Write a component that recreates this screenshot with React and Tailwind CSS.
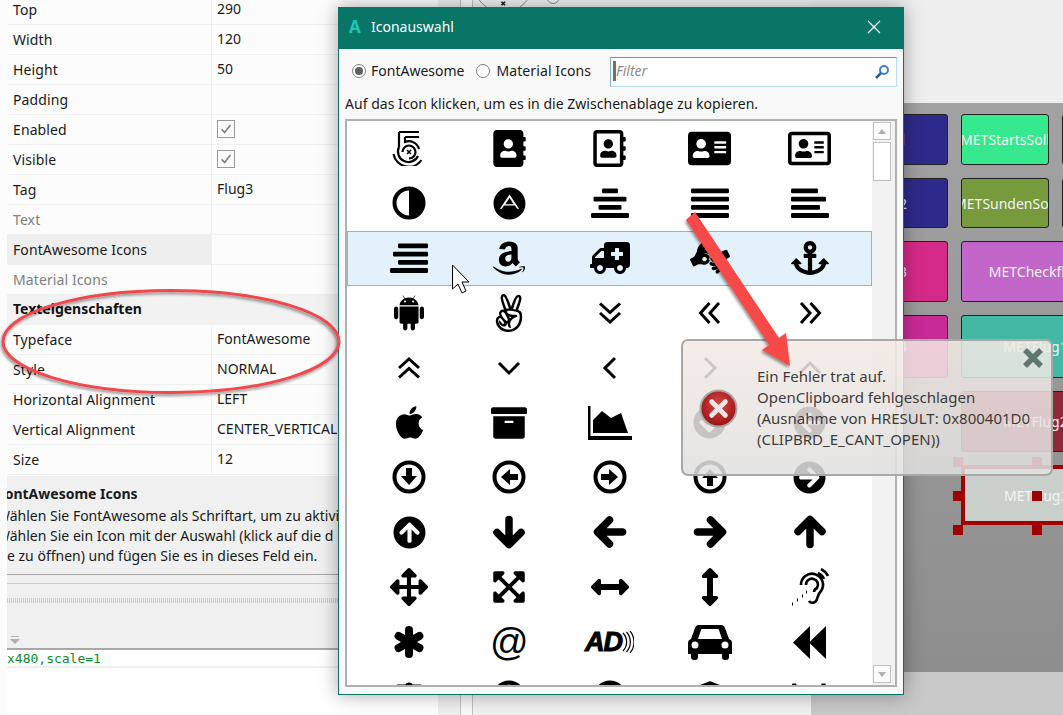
import {
  FaAddressBook, FaRegAddressBook, FaAddressCard, FaRegAddressCard,
  FaAdn, FaAmazon, FaAmbulance, FaAmericanSignLanguageInterpreting, FaAnchor,
  FaAngellist, FaApple, FaArchive, FaArrowCircleDown, FaArrowCircleLeft,
  FaArrowCircleRight, FaArrowCircleUp, FaArrowsAlt, FaExpandArrowsAlt, FaArrowsAltH, FaArrowsAltV,
  FaBalanceScale, FaBan, FaBandcamp, FaUniversity, FaChartBar,
} from "react-icons/fa";
import { AiFillAndroid } from "react-icons/ai";

// font awesome 4 shapes that the packaged set draws differently
const Glyph = ({ w, h, children, className = "", ...rest }) => (
  <svg viewBox={`0 0 ${w} ${h}`} width={w} height={h} className={className} {...rest}>
    {children}
  </svg>
);

const FiveHundred = () => (
  <Glyph w={34} h={36} fill="none" stroke="black" strokeWidth="2.2">
    <path d="M7 2h20M13 7h14M7 2v15" />
    <path d="M10.5 22a6.5 6.5 0 1 1 6.5 6.5" />
    <path d="M15 20l4 4m0-4l-4 4" strokeWidth="1.6" />
    <path d="M7 17a10.5 10.5 0 1 0 19 9" />
    <path d="M13 7v5a10.5 10.5 0 0 1 14 7" />
    <path d="M1.5 24a15.5 15.5 0 0 0 28 6" />
  </Glyph>
);

const Adjust = () => (
  <Glyph w={34} h={34}>
    <circle cx="17" cy="17" r="14.5" fill="white" stroke="black" strokeWidth="4" />
    <path d="M17 1a16 16 0 0 1 0 32z" fill="black" />
  </Glyph>
);

const Bars = ({ widths, align }) => (
  <Glyph w={38} h={30}>
    {widths.map((width, i) => (
      <rect
        key={i}
        x={align === "left" ? 0 : align === "right" ? 38 - width : (38 - width) / 2}
        y={0.5 + i * 8.2}
        width={width}
        height="4.8"
        rx="1.2"
        fill="black"
      />
    ))}
  </Glyph>
);

const Chevron = ({ d }) => (
  <Glyph w={24} h={24} fill="none" stroke="black" strokeWidth="3">
    <path d={d} />
  </Glyph>
);

const DOUBLE_DOWN = "M2 2.5l10 9 10-9M2 12l10 9 10-9";
const DOUBLE_UP = "M2 12l10-9 10 9M2 21.5l10-9 10 9";
const DOUBLE_LEFT = "M11.5 2l-9 10 9 10M21 2l-9 10 9 10";
const DOUBLE_RIGHT = "M3 2l9 10-9 10M12.5 2l9 10-9 10";

const ChartArea = () => (
  <Glyph w={44} h={34}>
    <path d="M0 0h2.5v30H44v4H0z" fill="black" />
    <path d="M5 27V14l9-9 9 7 10-5 7 20z" fill="black" />
  </Glyph>
);

const RingArrow = ({ rotate = 0 }) => (
  <Glyph w={34} h={34}>
    <circle cx="17" cy="17" r="14.5" fill="none" stroke="black" strokeWidth="4" />
    <path d="M14 8h6v8h5l-8 9-8-9h5z" fill="black" transform={`rotate(${rotate} 17 17)`} />
  </Glyph>
);

const BoldArrow = ({ rotate = 0 }) => (
  <Glyph w={34} h={34} fill="none" stroke="black" strokeWidth="7.5" strokeLinecap="round" strokeLinejoin="round">
    <path d="M17 4.5v24M5 17.5l12 12 12-12" transform={`rotate(${rotate} 17 17)`} />
  </Glyph>
);

const ListeningEar = () => (
  <Glyph w={38} h={38} fill="none" stroke="black" strokeWidth="2.6">
    <path d="M10 17a11 11 0 1 1 20 6c-3 3-3 5-4 8-1 4-6 5-8 2" />
    <path d="M15 17a6 6 0 1 1 11 3c-2 1-3 2-3 4" />
    <path d="M27 5a11 11 0 0 1 6 6M30 1a15 15 0 0 1 7 7" />
    <path d="M1 36l1 0M6 32l1 0M11 28l1 0M15 24l1 0" strokeWidth="3" />
  </Glyph>
);

const Asterisk = () => (
  <Glyph w={34} h={34} fill="none" stroke="black" strokeWidth="8" strokeLinecap="round">
    <path d="M17 5v24M6.6 11l20.8 12M27.4 11L6.6 23" />
  </Glyph>
);

const AtSign = () => (
  <span className="font-['Liberation_Sans',sans-serif] text-[38px] leading-none text-black">@</span>
);

const AudioDescription = () => (
  <span className="flex items-center">
    <span className="font-['Liberation_Sans',sans-serif] text-[27px] font-bold italic leading-none tracking-[-1px] text-black [-webkit-text-stroke:1px_black]">
      AD
    </span>
    <Glyph w={12} h={22} fill="none" stroke="black" strokeWidth="1.2">
      <path d="M1 2a13 13 0 0 1 0 18M4.5 1a15 15 0 0 1 0 20M8 0a17 17 0 0 1 0 22" />
    </Glyph>
  </span>
);

const Car = () => (
  <Glyph w={44} h={36}>
    <path
      fillRule="evenodd"
      d="M11 1h22q3 0 4 3l4 11q3 1 3 4v11h-3v3q0 3-3 3h-1q-3 0-3-3v-3H10v3q0 3-3 3H6q-3 0-3-3v-3H0V19q0-3 3-4L7 4q1-3 4-3zM10 15h24l-3-9q0-1-1-1H14q-1 0-1 1z"
      fill="black"
    />
    <circle cx="7" cy="21" r="3.5" fill="white" />
    <circle cx="37" cy="21" r="3.5" fill="white" />
  </Glyph>
);

const Backward = () => (
  <Glyph w={33} h={33}>
    <path d="M17 0v33L0 16.5zM33 0v33L16 16.5z" fill="black" />
  </Glyph>
);

const fa = (Icon, size, className) => <Icon size={size} className={className} />;

const ICON_ROWS = [
  [<FiveHundred />, fa(FaAddressBook, 37), fa(FaRegAddressBook, 37), fa(FaAddressCard, 43), fa(FaRegAddressCard, 43)],
  [<Adjust />, fa(FaAdn, 33), <Bars widths={[16, 33, 23, 38]} align="center" />, <Bars widths={[38, 38, 38, 38]} align="left" />, <Bars widths={[27, 35, 29, 38]} align="left" />],
  [<Bars widths={[30, 35, 30, 38]} align="right" />, fa(FaAmazon, 38), fa(FaAmbulance, 40, "-scale-x-100"), fa(FaAmericanSignLanguageInterpreting, 40), fa(FaAnchor, 38)],
  [fa(AiFillAndroid, 40), fa(FaAngellist, 38), <Chevron d={DOUBLE_DOWN} />, <Chevron d={DOUBLE_LEFT} />, <Chevron d={DOUBLE_RIGHT} />],
  [<Chevron d={DOUBLE_UP} />, <Chevron d="M2 7l10 10 10-10" />, <Chevron d="M17 2L7 12l10 10" />, <Chevron d="M7 2l10 10L7 22" />, <Chevron d="M2 17L12 7l10 10" />],
  [fa(FaApple, 37), fa(FaArchive, 36), <ChartArea />, fa(FaArrowCircleDown, 33), fa(FaArrowCircleLeft, 33)],
  [<RingArrow />, <RingArrow rotate={90} />, <RingArrow rotate={270} />, <RingArrow rotate={180} />, fa(FaArrowCircleRight, 33)],
  [fa(FaArrowCircleUp, 33), <BoldArrow />, <BoldArrow rotate={90} />, <BoldArrow rotate={270} />, <BoldArrow rotate={180} />],
  [fa(FaArrowsAlt, 38), fa(FaExpandArrowsAlt, 36), fa(FaArrowsAltH, 38), fa(FaArrowsAltV, 38), <ListeningEar />],
  [<Asterisk />, <AtSign />, <AudioDescription />, <Car />, <Backward />],
  [fa(FaBalanceScale, 36), fa(FaBan, 34), fa(FaBandcamp, 34), fa(FaUniversity, 36), fa(FaChartBar, 36)],
];

const PROPS_TOP = [
  { label: "Top", value: "290" },
  { label: "Width", value: "120" },
  { label: "Height", value: "50" },
  { label: "Padding" },
  { label: "Enabled", check: true },
  { label: "Visible", check: true },
  { label: "Tag", value: "Flug3" },
  { label: "Text", muted: true },
  { label: "FontAwesome Icons", active: true },
  { label: "Material Icons", muted: true },
];

const PROPS_TEXT = [
  { label: "Typeface", value: "FontAwesome" },
  { label: "Style", value: "NORMAL" },
  { label: "Horizontal Alignment", value: "LEFT" },
  { label: "Vertical Alignment", value: "CENTER_VERTICAL" },
  { label: "Size", value: "12" },
];

const PropRow = ({ label, value, check, muted, active }) => (
  <div className="flex h-[30px] border-b border-[#f0f0f0]">
    <div
      className={`flex w-[205px] shrink-0 items-center border-r border-[#f0f0f0] pl-[6px] tracking-[0.1px] ${
        active ? "bg-[#eeeeee]" : ""
      } ${muted ? "text-[#808080]" : "text-[#1a1a1a]"}`}
    >
      {label}
    </div>
    <div className="flex flex-1 items-center whitespace-nowrap pb-[2px] pl-[5px] text-[#1a1a1a]">
      {check ? (
        <span className="flex h-[18px] w-[18px] items-center justify-center border border-[#999999] bg-[#fbfbfb]">
          <svg viewBox="0 0 16 16" className="h-[14px] w-[14px]" fill="none" stroke="#808080" strokeWidth="2">
            <path d="M3 8.5 6.5 12 13 3.5" />
          </svg>
        </span>
      ) : (
        value
      )}
    </div>
  </div>
);

const PropertyPanel = () => (
  <div className="flex w-[438px] shrink-0 flex-col overflow-hidden bg-[#fcfcfc] pl-[7px] text-[14px]">
    <div className="-mt-[7px] shrink-0 pt-[2px]">
      {PROPS_TOP.map((p) => (
        <PropRow key={p.label} {...p} />
      ))}
      <div className="flex h-[30px] items-center bg-[#f2f2f2] pb-[3px] pl-[6px] font-bold text-[#111111]">
        Texteigenschaften
      </div>
      {PROPS_TEXT.map((p) => (
        <PropRow key={p.label} {...p} />
      ))}
    </div>
    <div className="mt-[1px] flex h-[99px] shrink-0 flex-col justify-center overflow-hidden whitespace-nowrap border-b border-[#a8a8a8] bg-[#f0f0f0] leading-[20px] text-[#1a1a1a]">
      <div className="-ml-[10px] font-bold">FontAwesome Icons</div>
      <div className="-ml-[10px] mt-[2px]">Wählen Sie FontAwesome als Schriftart, um zu aktivieren.</div>
      <div className="-ml-[10px]">Wählen Sie ein Icon mit der Auswahl (klick auf die d</div>
      <div>e zu öffnen) und fügen Sie es in dieses Feld ein.</div>
    </div>
    <div className="flex h-[73px] shrink-0 flex-col bg-[#f0f0f0]">
      <div className="mt-[8px] h-px bg-[#cfcfcf]" />
      <div className="mt-[14px] h-[5px] bg-[repeating-linear-gradient(90deg,#cccccc_0,#cccccc_1px,#eeeeee_1px,#eeeeee_2px)]" />
      <div className="ml-[3px] mt-[33px]">
        <svg viewBox="0 0 10 8" className="h-[8px] w-[10px]" fill="#b0b0b0">
          <path d="M1 0h8v1H1zM0 3h10L5 8z" />
        </svg>
      </div>
    </div>
    <div className="h-[2px] shrink-0 bg-[#a8a8a8]" />
    <div className="flex h-[18px] shrink-0 items-center whitespace-nowrap border-b-2 border-[#f0f0f0] bg-white pt-[2px] font-['DejaVu_Sans_Mono',monospace] text-[13px] text-[#0a8a2a]">
      x480,scale=1
    </div>
    <div className="flex-1 bg-white" />
  </div>
);

const MiddleStrip = () => (
  <div className="flex w-[373px] shrink-0 bg-[#f0f0f0]">
    <div className="w-[22px] shrink-0 bg-[#efefef]" />
    <div className="w-[13px] shrink-0 border-x border-[#c0c0c0] bg-[#f8f8f8]" />
    <div className="h-[7px] w-[120px] shrink-0 overflow-hidden">
      <svg viewBox="0 0 120 8" className="h-[7px] w-[120px]" fill="none" stroke="#808080" strokeWidth="1">
        <circle cx="26" cy="-20" r="34" />
        <circle cx="83" cy="-3" r="7" />
        <path d="M24 2l4 4m0-4l-4 4" stroke="#222222" strokeWidth="2" />
      </svg>
    </div>
  </div>
);

const CANVAS_BUTTONS = [
  { text: "l", bg: "bg-[#2e2a8c]", className: "justify-end pr-[42px] text-[#e0a070]" },
  { text: "METStartsSoll", bg: "bg-[#36e88e]" },
  { text: "", bg: "bg-[#c0189a]" },
  { text: "2", bg: "bg-[#2e2a8c]", className: "justify-end pr-[40px]" },
  { text: "METSundenSoll", bg: "bg-[#769a3c]" },
  { text: "", bg: "bg-[#6a2a9a]" },
  { text: "3", bg: "bg-[#d62a88]", className: "justify-end pr-[40px]" },
  { text: "METCheckflug", bg: "bg-[#c267c9]", wide: true },
  { text: "4", bg: "bg-[#c92b96]", className: "justify-end pr-[40px]" },
  { text: "METFlug1", bg: "bg-[#43b9a5]", wide: true },
  { text: "", bg: "invisible" },
  { text: "METFlug2", bg: "bg-[#8e2a38]", wide: true },
];

const Handle = ({ className }) => (
  <span className={`absolute h-[10px] w-[10px] bg-[#a00000] ${className}`} />
);

const DesignCanvas = () => (
  <div className="flex min-w-0 flex-1 flex-col overflow-hidden">
    <div className="h-[103px] shrink-0 bg-[#eeeeee]" />
    <div className="h-[569px] shrink-0 bg-gradient-to-b from-[#a2a2a2] to-[#8e8e8e] pl-[17px] pt-[11px]">
      <div className="grid w-[400px] grid-cols-[120px_88px_120px] grid-rows-[51px_50px_61px_63px_61px_60px] gap-x-[13px] gap-y-[13px] text-[14px] text-[#f4f4f4]">
        {CANVAS_BUTTONS.map((b, i) => (
          <div
            key={i}
            className={`flex items-center justify-center overflow-hidden whitespace-nowrap rounded-[3px] border border-[#222222] ${b.bg} ${
              b.wide ? "col-span-2 pr-[72px]" : ""
            } ${b.className || ""}`}
          >
            {b.text}
          </div>
        ))}
        <div className="relative col-span-2 col-start-2 flex items-center border-[4px] border-[#a50000] bg-[#c9d0cb] pl-[39px]">
          METFlug3
          <Handle className="-left-[12px] -top-[12px]" />
          <Handle className="-top-[12px] left-[67px]" />
          <Handle className="-left-[12px] top-[22px]" />
          <Handle className="left-[67px] top-[22px]" />
          <Handle className="-bottom-[14px] -left-[12px]" />
          <Handle className="-bottom-[14px] left-[67px]" />
        </div>
      </div>
    </div>
    <div className="flex-1 bg-[#c8c8c8]" />
  </div>
);

const IconDialog = () => (
  <div className="absolute left-[338px] top-[7px] flex h-[688px] w-[566px] flex-col border border-[#087566] bg-[#f9f9f9] shadow-[0_0_18px_rgba(0,0,0,0.35)]">
    <div className="flex h-[41px] shrink-0 items-center bg-[#087566] pb-[4px] pl-[10px] pr-[22px] text-[14px] text-white">
      <span className="w-[21px] text-[17px] font-bold text-[#1fc4b4]">A</span>
      <span className="ml-[1px] flex-1">Iconauswahl</span>
      <svg viewBox="0 0 14 14" className="h-[14px] w-[14px]" stroke="white" strokeWidth="1.2">
        <path d="M1 1l12 12M13 1L1 13" />
      </svg>
    </div>
    <div className="flex h-[38px] shrink-0 items-end pl-[13px] pr-[6px] text-[14px] text-[#1a1a1a]">
      <div className="flex h-[30px] items-center pb-[3px]">
        <span className="flex h-[14px] w-[14px] items-center justify-center rounded-full border border-[#808080] bg-white">
          <span className="h-[8px] w-[8px] rounded-full bg-[#606060]" />
        </span>
        <span className="ml-[5px]">FontAwesome</span>
        <span className="ml-[12px] h-[14px] w-[14px] rounded-full border border-[#808080] bg-white" />
        <span className="ml-[6px] tracking-[0.1px]">Material Icons</span>
      </div>
      <div className="ml-auto flex h-[30px] w-[287px] items-center border border-[#b8dcf0] border-l-[#7ab0d4] border-t-[#5b9bc8] bg-white pb-[3px] pl-[2px] pr-[6px]">
        <span className="h-[20px] w-[3px] bg-[#707070]" />
        <span className="flex-1 text-[14px] italic text-[#8a8a8a]">Filter</span>
        <svg viewBox="0 0 16 16" className="mt-[3px] h-[16px] w-[16px]" fill="none">
          <circle cx="10" cy="6" r="4" stroke="#3f7fd0" strokeWidth="2" />
          <path d="M7 9l-5 5" stroke="#2f5a9a" strokeWidth="2.5" />
        </svg>
      </div>
    </div>
    <div className="flex h-[32px] shrink-0 items-center pl-[6px] text-[14px] tracking-[0.03px] text-[#1a1a1a]">
      Auf das Icon klicken, um es in die Zwischenablage zu kopieren.
    </div>
    <div className="ml-[6px] flex h-[568px] w-[552px] overflow-hidden border-2 border-[#b0b0b0] bg-white">
      <div className="flex-1 overflow-hidden">
        {ICON_ROWS.map((row, i) => (
          <div
            key={i}
            className={`flex h-[54.85px] w-full items-center border px-[11px] ${
              i === 2 ? "border-[#7abde0] bg-[#e3f2fa]" : "border-transparent"
            }`}
          >
            {row.map((icon, j) => (
              <div key={j} className="flex flex-1 items-center justify-center text-black">
                {icon}
              </div>
            ))}
          </div>
        ))}
      </div>
      <div className="flex w-[23px] shrink-0 flex-col bg-[#f2f2f2] pl-[1px] pr-[4px] pt-px">
        <div className="flex h-[18px] items-center justify-center border border-[#c0c0c0] bg-[#fbfbfb]">
          <span className="h-0 w-0 border-x-[4px] border-b-[5px] border-x-transparent border-b-[#b0b0b0]" />
        </div>
        <div className="mt-[2px] h-[39px] border border-[#c0c0c0] bg-white" />
        <div className="mb-[2px] mt-auto flex h-[18px] items-center justify-center border border-[#c0c0c0] bg-[#fbfbfb]">
          <span className="h-0 w-0 border-x-[4px] border-t-[5px] border-x-transparent border-t-[#b0b0b0]" />
        </div>
      </div>
    </div>
  </div>
);

const ErrorToast = () => (
  <div className="absolute left-[681px] top-[339px] flex h-[137px] w-[372px] items-start rounded-[7px] border-2 border-[#a8a8a8] bg-gradient-to-b from-[rgba(244,234,228,0.86)] to-[rgba(224,224,224,0.86)] pl-[16px] pt-[25px] text-[15px] leading-[21px] text-[#3c3c3c]">
    <svg viewBox="0 0 40 40" className="mt-[23px] h-[39px] w-[39px] shrink-0">
      <defs>
        <radialGradient id="err" cx="50%" cy="40%" r="60%">
          <stop offset="0%" stopColor="#d84a4a" />
          <stop offset="100%" stopColor="#9a1010" />
        </radialGradient>
      </defs>
      <circle cx="20" cy="20" r="18.5" fill="url(#err)" stroke="#a8a8a8" strokeWidth="2" />
      <path d="M13 13l14 14M27 13L13 27" stroke="#e8e8e8" strokeWidth="5" strokeLinecap="round" />
    </svg>
    <div className="ml-[19px] whitespace-nowrap">
      <div>Ein Fehler trat auf.</div>
      <div>OpenClipboard fehlgeschlagen</div>
      <div>(Ausnahme von HRESULT: 0x800401D0</div>
      <div>(CLIPBRD_E_CANT_OPEN))</div>
    </div>
    <svg viewBox="0 0 22 22" className="absolute right-[7px] top-[6px] h-[22px] w-[22px]">
      <path d="M3 3l16 16M19 3L3 19" stroke="#5f7570" strokeWidth="5.5" />
    </svg>
  </div>
);

const Annotations = () => (
  <svg className="pointer-events-none absolute left-0 top-0 h-[715px] w-[1063px]" viewBox="0 0 1063 715" fill="none">
    <defs>
      <filter id="shadow" x="-10%" y="-10%" width="120%" height="130%">
        <feDropShadow dx="-1" dy="2" stdDeviation="1.8" floodColor="#000000" floodOpacity="0.45" />
      </filter>
    </defs>
    <ellipse cx="171" cy="341.5" rx="168" ry="51" stroke="#f0484e" strokeWidth="3" filter="url(#shadow)" />
    <path d="M686 220L695 212 779 338 786 333 790 366 762 350 769 345Z" fill="#f84848" filter="url(#shadow)" />
    <path d="M452.5 265v24l5.5-5 4 9 4-2-4-9h7z" fill="white" stroke="black" strokeWidth="1" />
  </svg>
);

export default function App() {
  return (
    <div className="relative flex h-[715px] w-[1063px] overflow-hidden bg-white font-['Noto_Sans',sans-serif]">
      <PropertyPanel />
      <MiddleStrip />
      <DesignCanvas />
      <IconDialog />
      <ErrorToast />
      <Annotations />
    </div>
  );
}
